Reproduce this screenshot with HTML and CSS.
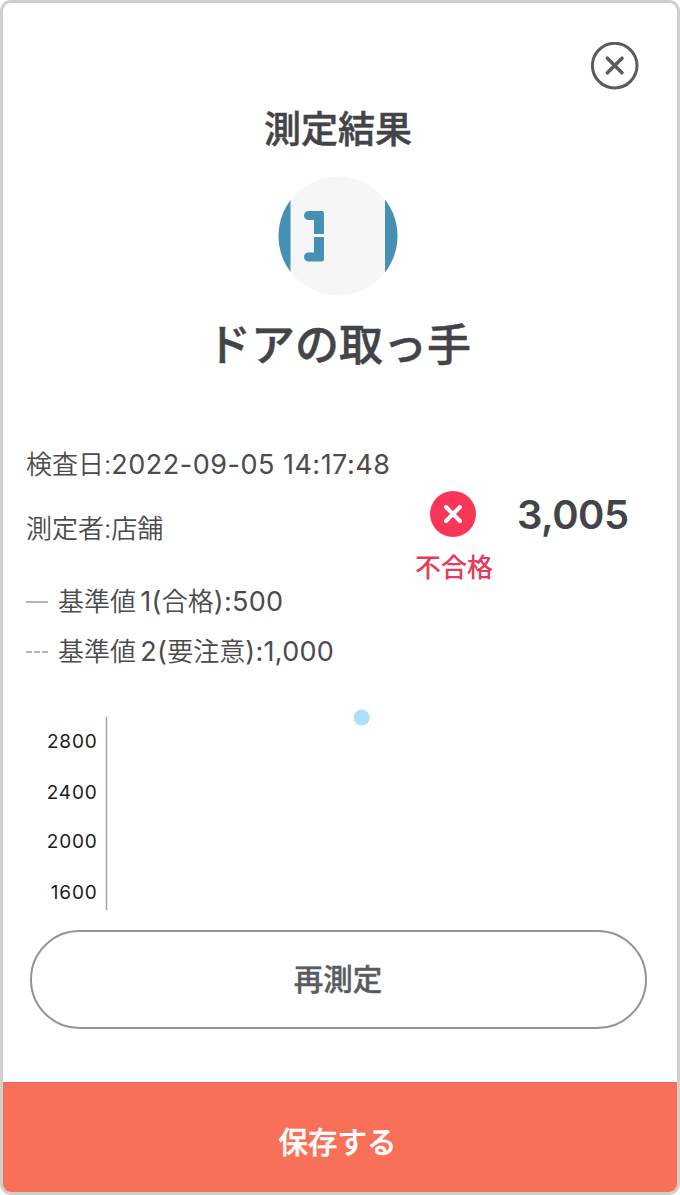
FILE: index.html
```html
<!DOCTYPE html>
<html lang="ja">
<head>
    <meta charset="UTF-8">
    <meta name="viewport" content="width=device-width, initial-scale=1.0">
    <title>測定結果</title>
    <link rel="stylesheet" href="styles.css">
</head>
<body>
    <div class="screen">
        <header class="top">
            <button class="close" type="button" aria-label="閉じる">
                <svg width="48" height="48" viewBox="0 0 48 48" fill="none" stroke="#5c5c5f" stroke-linecap="round">
                    <circle cx="23.700" cy="23.600" r="22.300" stroke-width="3"/>
                    <path d="M16.400 16.200 31 30.800M31 16.200 16.400 30.800" stroke-width="3.600"/>
                </svg>
            </button>
        </header>

        <h1>測定結果</h1>
        <svg class="thumb" width="120" height="120" viewBox="0 0 120 120">
            <clipPath id="round"><circle cx="60" cy="60" r="59.5"/></clipPath>
            <g clip-path="url(#round)">
                <rect width="120" height="120" fill="#f6f6f7"/>
                <g fill="#4590b4">
                    <rect width="12.5" height="120"/>
                    <rect x="107" width="13" height="120"/>
                    <path d="M30.500 35H44q2 0 2 2V58H36V44H30.500a4.500 4.500 0 0 1 0-9Z"/>
                    <path d="M36 61H46V83.500q0 2-2 2H30.500a4.500 4.500 0 0 1 0-9H36Z"/>
                </g>
            </g>
        </svg>
        <h2>ドアの取っ手</h2>

        <div class="summary">
            <div class="info">
                <p>検査日:<span class="date">2022-09-05 14:17:48</span></p>
                <p>測定者:店舗</p>
            </div>
            <div class="judge">
                <svg width="46" height="46" viewBox="0 0 46 46">
                    <circle cx="23" cy="23" r="23" fill="#f83657"/>
                    <path d="M16 16 30 30M30 16 16 30" stroke="#fff" stroke-width="4" stroke-linecap="round"/>
                </svg>
                <span>不合格</span>
            </div>
            <div class="value">3,005</div>
        </div>

        <ul class="legend">
            <li><i class="line"></i><span>基準値 <span class="num">1(</span>合格<span class="num">):500</span></span></li>
            <li><i class="line dashed"></i><span>基準値 <span class="num">2(</span>要注意<span class="num">):1,000</span></span></li>
        </ul>

        <svg class="chart" width="617" height="220" viewBox="0 0 617 220">
            <line x1="76.500" y1="17" x2="76.500" y2="210" stroke="#a3a3a3" stroke-width="1.500"/>
            <g class="ticks">
                <text x="67.500" y="48">2800</text>
                <text x="67.500" y="98.500">2400</text>
                <text x="67.500" y="148">2000</text>
                <text x="67.500" y="198.500">1600</text>
            </g>
            <circle cx="331.700" cy="17.500" r="8" fill="#ade1fa"/>
        </svg>

        <button class="retry" type="button">再測定</button>
        <button class="save" type="button">保存する</button>
    </div>
</body>
</html>
```

FILE: styles.css
```css
body {
    margin: 0;
    background-color: #fff;
    font-family: Inter, "Noto Sans CJK JP", sans-serif;
    color: #434448;
}
.screen {
    box-sizing: border-box;
    height: 1195px;
    border: 3px solid #cfcfcf;
    border-radius: 11px;
    overflow: hidden;
    display: flex;
    flex-direction: column;
}
.top {
    display: flex;
    justify-content: flex-end;
    padding: 39px 38px 0 0;
}
button {
    border: none;
    padding: 0;
    background: none;
    font-family: inherit;
    cursor: pointer;
}
.close {
    width: 48px;
    height: 48px;
}
.close svg {
    display: block;
}
h1,
h2 {
    height: 60px;
    line-height: 60px;
    font-weight: 500;
    text-align: center;
    -webkit-text-stroke: 0.5px #434448;
}
h1 {
    margin: 10px 4px 0 0;
    font-size: 37px;
}
.thumb {
    align-self: center;
    margin: 16px 4px 0 0;
}
h2 {
    margin: 19px 2px 0 0;
    font-size: 44px;
}
.summary {
    display: flex;
    height: 144px;
    margin-top: 58px;
    padding-left: 23px;
    color: #4b4b4e;
}
.info {
    width: 389px;
}
.info p {
    margin: 0;
    line-height: 64px;
    font-size: 26px;
    font-weight: 350;
    white-space: nowrap;
}
.date {
    font-size: 27px;
    font-weight: 400;
    letter-spacing: 0.5px;
}
.judge {
    width: 78px;
    padding-top: 58px;
    display: flex;
    flex-direction: column;
    align-items: center;
}
.judge svg {
    flex: none;
    margin-right: 2px;
}
.judge span {
    margin-top: 11px;
    line-height: 40px;
    font-size: 26px;
    font-weight: 500;
    color: #e83b5a;
    white-space: nowrap;
}
.value {
    padding: 57px 0 0 24px;
    line-height: 50px;
    font-size: 40px;
    font-weight: 600;
    letter-spacing: -0.5px;
    color: #434448;
}
.legend {
    list-style: none;
    margin: 0;
    padding: 0 0 0 23px;
    font-size: 26px;
    font-weight: 350;
    word-spacing: -3px;
    color: #4b4b4e;
}
.legend li {
    display: flex;
    align-items: center;
    gap: 10px;
    height: 50px;
    line-height: 50px;
}
.num {
    font-size: 27px;
    font-weight: 400;
    letter-spacing: 0.3px;
}
.line {
    width: 22px;
    height: 2px;
    background-color: #b5b5b5;
}
.dashed {
    background: repeating-linear-gradient(90deg, #b5b5b5 0 6px, transparent 6px 8px);
}
.chart {
    margin: 23px 0 0 27px;
}
.ticks {
    font-size: 19px;
    letter-spacing: 0.8px;
    text-anchor: end;
    fill: #1b1b1b;
}
.retry,
.save {
    box-sizing: border-box;
    font-size: 29.5px;
    font-weight: 500;
    -webkit-text-stroke: 0.4px currentColor;
}
.retry {
    flex: none;
    height: 99px;
    margin: 10px 30px 0 27px;
    padding: 0 1px 5px 0;
    border: 2px solid #949494;
    border-radius: 50px;
    color: #5a5b5e;
}
.save {
    height: 110px;
    margin-top: auto;
    padding: 5px 5px 0 0;
    border-top: 1px solid #d8705f;
    background-color: #f97059;
    color: #fff;
}
```
